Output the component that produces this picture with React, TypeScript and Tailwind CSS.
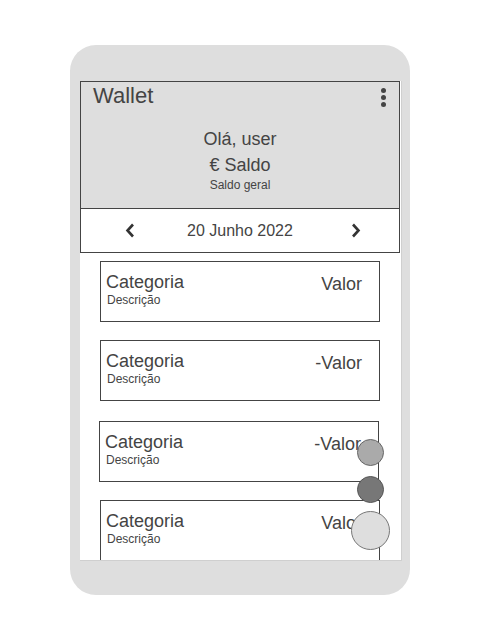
import React from "react";

type Tx = { top: string; left: string; value: string };

const items: Tx[] = [
  { top: "mt-[8px]", left: "ml-[20px]", value: "Valor" },
  { top: "mt-[18px]", left: "ml-[20px]", value: "-Valor" },
  { top: "mt-[20px]", left: "ml-[19px]", value: "-Valor" },
  { top: "mt-[18px]", left: "ml-[20px]", value: "Valor" },
];

function Chevron({ dir }: { dir: "left" | "right" }) {
  return (
    <svg width="10" height="15" viewBox="0 0 10 15" className="shrink-0">
      <path
        d={dir === "left" ? "M8 1.5 L2.5 7.5 L8 13.5" : "M2 1.5 L7.5 7.5 L2 13.5"}
        fill="none"
        stroke="#333"
        strokeWidth="2.6"
      />
    </svg>
  );
}

function TxCard({ item }: { item: Tx }) {
  return (
    <div
      className={`${item.top} ${item.left} flex h-[61px] w-[280px] shrink-0 justify-between border border-[#444] pl-[5px] pr-[17px] pt-[10px]`}
    >
      <div className="flex flex-col">
        <span className="text-[18px] leading-[20px]">Categoria</span>
        <span className="ml-px mt-px text-[12px] leading-[14px]">Descrição</span>
      </div>
      <span className="mt-[2px] text-[18px] leading-[20px]">{item.value}</span>
    </div>
  );
}

export default function App() {
  return (
    <div
      className="h-[640px] w-[480px] bg-white pl-[70px] pt-[45px] text-[#444]"
      style={{ fontFamily: '"Liberation Sans", Arial, sans-serif' }}
    >
      <div className="h-[550px] w-[340px] rounded-[26px] bg-[#dedede] pl-[10px] pt-[36px]">
        <div className="relative flex h-[480px] w-[322px] flex-col overflow-hidden border-b border-r border-[#cfcfcf] bg-white">
          {/* header */}
          <div className="flex h-[128px] w-[320px] shrink-0 flex-col border border-[#444] bg-[#dedede] pl-[12px] pr-[13px] pt-[2px]">
            <div className="flex items-start justify-between">
              <span className="text-[22px] leading-[24px]">Wallet</span>
              <div className="mt-[4px] flex flex-col gap-[2px]">
                <span className="h-[5px] w-[5px] rounded-full bg-[#444]" />
                <span className="h-[5px] w-[5px] rounded-full bg-[#444]" />
                <span className="h-[5px] w-[5px] rounded-full bg-[#444]" />
              </div>
            </div>
            <div className="-ml-[12px] -mr-[13px] mt-[18px] flex flex-col items-center">
              <span className="text-[18px] leading-[26px]">Olá, user</span>
              <span className="text-[18px] leading-[26px]">€ Saldo</span>
              <span className="text-[12px] leading-[14px]">Saldo geral</span>
            </div>
          </div>

          {/* date selector */}
          <div className="flex h-[44px] w-[320px] shrink-0 items-center border-x border-b border-[#444] pl-[44px]">
            <Chevron dir="left" />
            <span className="ml-[52px] text-[16px] leading-[20px]">20 Junho 2022</span>
            <span className="ml-[58px]">
              <Chevron dir="right" />
            </span>
          </div>

          {items.map((it, i) => (
            <TxCard key={i} item={it} />
          ))}

          {/* floating buttons */}
          <span className="absolute left-[277px] top-[358px] h-[27px] w-[27px] rounded-full border border-[#666] bg-[#aaa]" />
          <span className="absolute left-[277px] top-[395px] h-[27px] w-[27px] rounded-full border border-[#555] bg-[#777]" />
          <span className="absolute left-[271px] top-[430px] h-[39px] w-[39px] rounded-full border border-[#777] bg-[#dedede]" />
        </div>
      </div>
    </div>
  );
}
